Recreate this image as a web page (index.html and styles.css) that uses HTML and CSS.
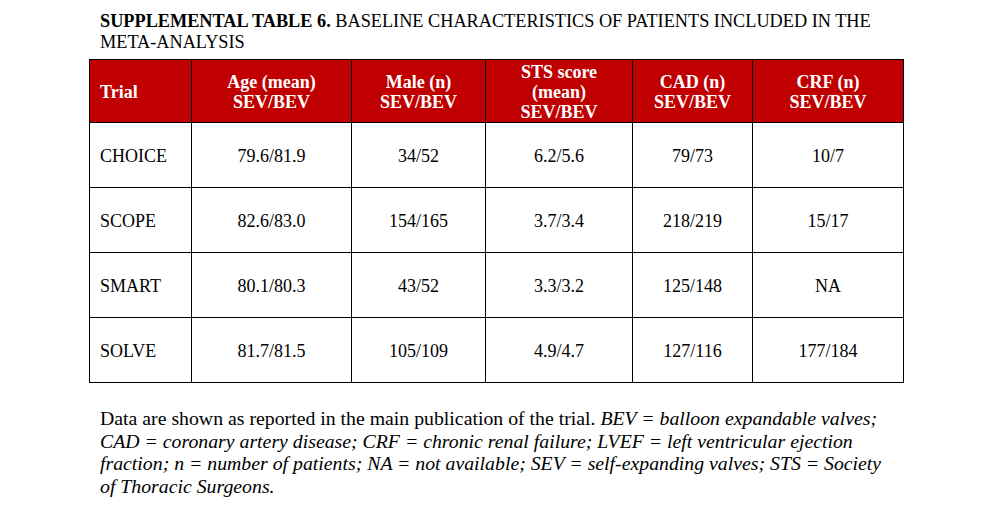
FILE: index.html
```html
<!DOCTYPE html>
<html>
<head>
<meta charset="utf-8">
<link rel="stylesheet" href="styles.css">
</head>
<body>
<div class="page">
  <p class="title"><b>SUPPLEMENTAL TABLE 6.</b> BASELINE CHARACTERISTICS OF PATIENTS INCLUDED IN THE META-ANALYSIS</p>
  <table class="data">
    <colgroup>
      <col class="c1"><col class="c2"><col class="c3"><col class="c4"><col class="c5"><col class="c6">
    </colgroup>
    <thead>
      <tr>
        <th class="left">Trial</th>
        <th>Age (mean)<br>SEV/BEV</th>
        <th>Male (n)<br>SEV/BEV</th>
        <th>STS score<br>(mean)<br>SEV/BEV</th>
        <th>CAD (n)<br>SEV/BEV</th>
        <th>CRF (n)<br>SEV/BEV</th>
      </tr>
    </thead>
    <tbody>
      <tr><td class="left">CHOICE</td><td>79.6/81.9</td><td>34/52</td><td>6.2/5.6</td><td>79/73</td><td>10/7</td></tr>
      <tr><td class="left">SCOPE</td><td>82.6/83.0</td><td>154/165</td><td>3.7/3.4</td><td>218/219</td><td>15/17</td></tr>
      <tr><td class="left">SMART</td><td>80.1/80.3</td><td>43/52</td><td>3.3/3.2</td><td>125/148</td><td>NA</td></tr>
      <tr><td class="left">SOLVE</td><td>81.7/81.5</td><td>105/109</td><td>4.9/4.7</td><td>127/116</td><td>177/184</td></tr>
    </tbody>
  </table>
  <p class="note">Data are shown as reported in the main publication of the trial. <i>BEV = balloon expandable valves; CAD = coronary artery disease; CRF = chronic renal failure; LVEF = left ventricular ejection fraction; n = number of patients; NA = not available; SEV = self-expanding valves; STS = Society of Thoracic Surgeons.</i></p>
</div>
</body>
</html>
```
FILE: styles.css
```css
html, body {
  margin: 0;
  padding: 0;
  background: #ffffff;
}
body {
  font-family: "Liberation Serif", "Times New Roman", serif;
  color: #000000;
}
.page {
  padding: 11px 0 0 89px;
  width: 814px;
}
.title {
  margin: 0;
  padding-left: 11px;
  font-size: 18.25px;
  line-height: 21px;
  width: 790px;
}
.data {
  margin-top: 6px;
  border-collapse: collapse;
  width: 814px;
  table-layout: fixed;
  font-size: 18px;
}
.c1 { width: 102px; }
.c2 { width: 160px; }
.c3 { width: 134px; }
.c4 { width: 147px; }
.c5 { width: 120px; }
.c6 { width: 151px; }
.data th {
  background: #c00000;
  color: #ffffff;
  font-weight: bold;
  border: 1px solid #000000;
  height: 60px;
  padding: 2px 2px 0 2px;
  line-height: 20px;
  text-align: center;
  vertical-align: middle;
}
.data td {
  border: 1px solid #000000;
  height: 62px;
  padding: 2px 2px 0 2px;
  text-align: center;
  vertical-align: middle;
}
.data .left {
  text-align: left;
  padding-left: 10px;
}
.note {
  margin: 24px 0 0 0;
  padding-left: 11px;
  font-size: 19.8px;
  line-height: 22.5px;
  width: 795px;
}
```
